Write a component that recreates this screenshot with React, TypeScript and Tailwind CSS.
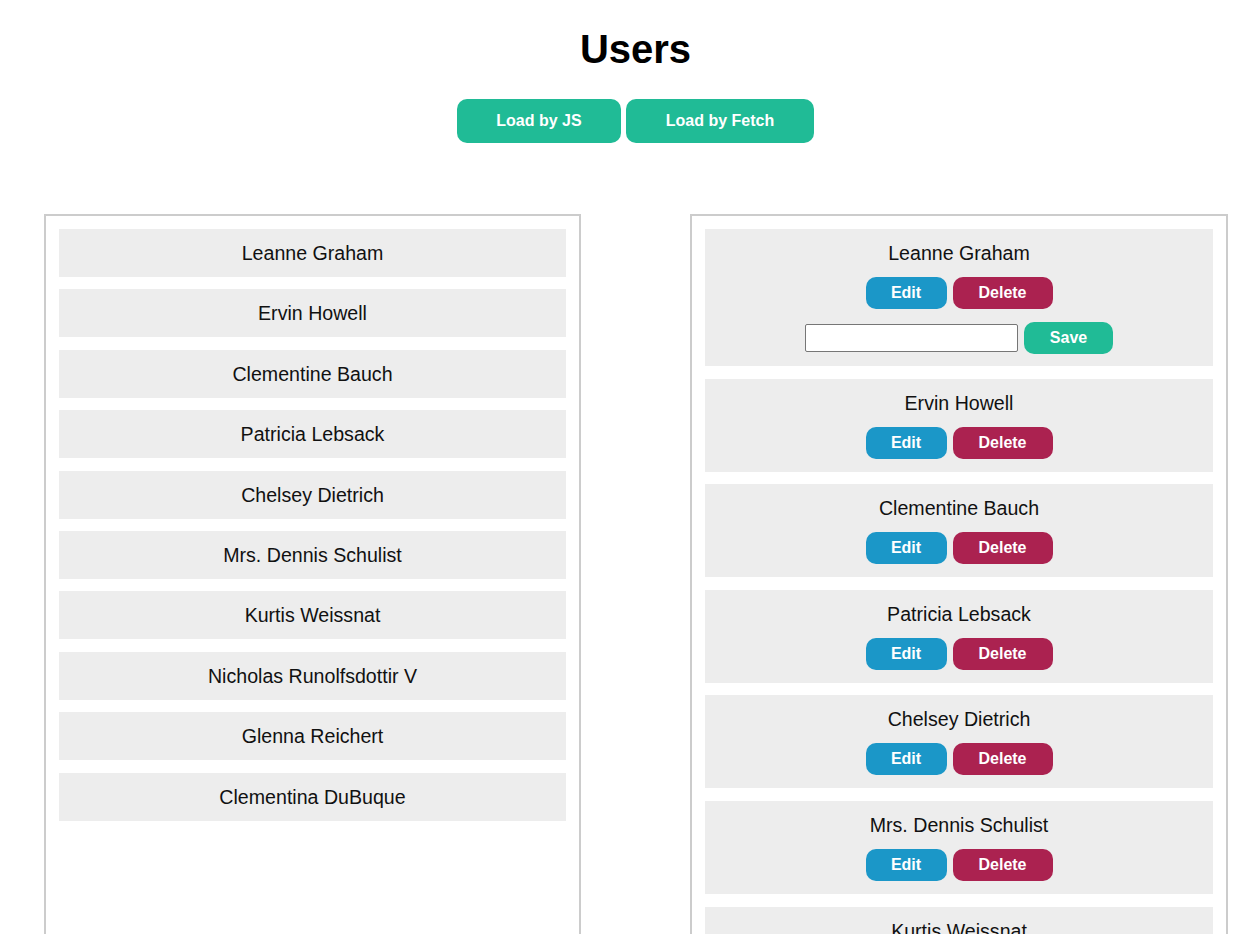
const users = [
  "Leanne Graham",
  "Ervin Howell",
  "Clementine Bauch",
  "Patricia Lebsack",
  "Chelsey Dietrich",
  "Mrs. Dennis Schulist",
  "Kurtis Weissnat",
  "Nicholas Runolfsdottir V",
  "Glenna Reichert",
  "Clementina DuBuque",
];

export default function App() {
  return (
    <div className="min-h-screen bg-white text-[#111] font-['Liberation_Sans',Arial,sans-serif]">
      <div className="pl-[22px]">
        <h1 className="pt-[27px] text-center text-[40px] leading-[45px] font-bold text-black">Users</h1>

        <div className="mt-[27px] flex justify-center gap-[5px]">
          <button className="h-[44px] w-[164px] rounded-[10px] bg-[#20bb96] text-[16px] font-bold text-white">
            Load by JS
          </button>
          <button className="h-[44px] w-[188px] rounded-[10px] bg-[#20bb96] text-[16px] font-bold text-white">
            Load by Fetch
          </button>
        </div>
      </div>

      <div className="mt-[71px] flex gap-[109px] pl-[44px]">
        {/* Lista simples */}
        <div className="w-[537px] border-2 border-[#cccccc] p-[13px]">
          <div className="flex flex-col gap-[12.4px]">
            {users.map((name) => (
              <div
                key={name}
                className="flex h-[48px] items-center justify-center bg-[#ededed] text-[19.6px] leading-[22px]"
              >
                {name}
              </div>
            ))}
          </div>
        </div>

        {/* Lista com acoes */}
        <div className="w-[538px] border-2 border-[#cccccc] p-[13px]">
          <div className="flex flex-col gap-[12.6px]">
            {users.map((name, i) => (
              <div
                key={name}
                className={`flex flex-col items-center bg-[#ededed] pt-[13px] ${i === 0 ? "pb-[12px]" : "pb-[13px]"}`}
              >
                <p className="text-[19.6px] leading-[22px]">{name}</p>
                <div className="mt-[13px] flex gap-[6px]">
                  <button className="h-[32px] w-[81px] rounded-[10px] bg-[#1b97c8] text-[16px] font-bold text-white">
                    Edit
                  </button>
                  <button className="h-[32px] w-[100px] rounded-[10px] bg-[#ab2250] text-[16px] font-bold text-white">
                    Delete
                  </button>
                </div>
                {i === 0 && (
                  <div className="mt-[13px] flex items-center gap-[6px]">
                    <input
                      type="text"
                      className="h-[28px] w-[213px] rounded-[2px] border border-[#767676] bg-white px-1 text-[13px]"
                    />
                    <button className="h-[32px] w-[89px] rounded-[10px] bg-[#20bb96] text-[16px] font-bold text-white">
                      Save
                    </button>
                  </div>
                )}
              </div>
            ))}
          </div>
        </div>
      </div>
    </div>
  );
}
